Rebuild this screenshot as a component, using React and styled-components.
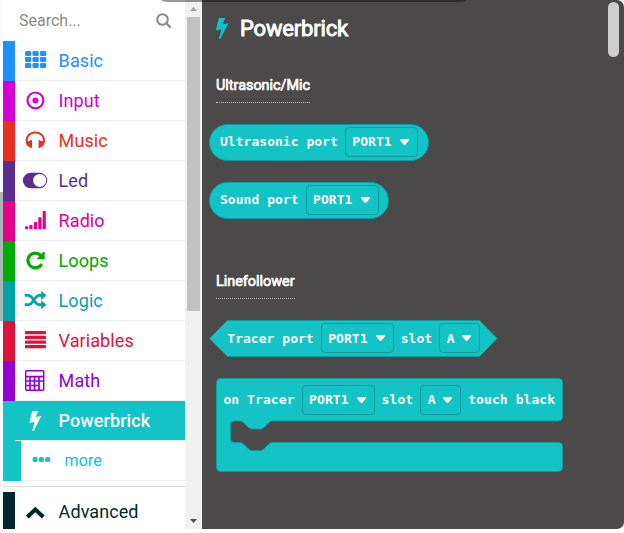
import React from "react";
import styled, { createGlobalStyle } from "styled-components";

const TEAL = "#14c3c5";
const EDGE = "#109c9e";

const Global = createGlobalStyle`
  * { box-sizing: border-box; }
  body { margin: 0; background: #fff; overflow: hidden; font-family: Roboto, sans-serif; }
`;

const Page = styled.main`
  position: relative;
  display: flex;
  width: 624px;
  height: 533px;
  overflow: hidden;
  background: #fff;
`;

const Gutter = styled.div`
  width: 3px;
  height: 529px;
  background: linear-gradient(#fafafa 0 192px, #a9b4b4 192px 321px, #fafafa 321px);
`;

const Toolbox = styled.nav`
  display: flex;
  flex-direction: column;
  width: 182px;
  height: 529px;
  overflow: hidden;
  background: #fff;
`;

const Search = styled.div`
  display: flex;
  flex: 0 0 41px;
  align-items: center;
  justify-content: space-between;
  padding: 0 14px 0 16px;
  color: #8a8a8a;
  font-size: 16px;
`;

const Category = styled.div`
  display: flex;
  flex: 0 0 40px;
  color: ${(p) => (p.$active ? "#fff" : p.$color)};
  line-height: 39px;
  letter-spacing: 0.08px;
  &::before {
    content: "";
    width: ${(p) => (p.$nested ? 18 : 12)}px;
    background: ${(p) => p.$color};
  }
`;

const CategoryBody = styled.div`
  display: flex;
  flex: 1;
  align-items: center;
  border-bottom: 1px solid #eceff1;
  background: ${(p) => (p.$active ? TEAL : "#fff")};
  font-size: ${(p) => (p.$nested ? 16 : 18)}px;
  font-weight: ${(p) => (p.$active ? 500 : 400)};
`;

const IconCell = styled.span`
  display: flex;
  align-self: flex-start;
  width: 43.6px;
  padding: 8px 0 0 9px;
`;

const Divider = styled.div`
  flex: 0 0 11px;
  padding-top: 5px;
  &::before {
    content: "";
    display: block;
    height: 1px;
    background: #dededf;
  }
`;

const Scrollbar = styled.div`
  display: flex;
  flex-direction: column;
  justify-content: space-between;
  align-items: center;
  width: 17px;
  height: 529px;
  background: #f1f1f1;
`;

const Thumb = styled.div`
  width: 13px;
  height: 294px;
  margin-bottom: auto;
  background: #c1c1c1;
`;

const ArrowButton = styled.div`
  display: flex;
  height: 17px;
  align-items: center;
  justify-content: center;
`;

const Flyout = styled.section`
  position: relative;
  width: 422px;
  height: 529px;
  padding: 13px 0 0 7px;
  border-radius: 0 7px 7px 0;
  background: #4b4949;
  color: #fff;
`;

const Title = styled.h1`
  display: flex;
  align-items: center;
  gap: 12px;
  height: 30px;
  margin: 0 0 0 7px;
  font-size: 22px;
  font-weight: 400;
  letter-spacing: -0.18px;
  -webkit-text-stroke: 0.9px currentColor;
`;

const GroupLabel = styled.h2`
  width: max-content;
  height: 26px;
  margin: ${(p) => p.$top}px 0 ${(p) => p.$bottom}px 7px;
  border-bottom: 1px dotted #bbb;
  font-size: 14.4px;
  font-weight: 400;
  line-height: 17px;
  -webkit-text-stroke: 0.7px currentColor;
`;

const Block = styled.div`
  position: relative;
  display: flex;
  align-items: center;
  width: ${(p) => p.$width}px;
  height: ${(p) => p.$height || 37}px;
  margin: 0 0 ${(p) => p.$gap || 0}px ${(p) => p.$indent || 0}px;
`;

const Shape = styled.svg`
  position: absolute;
  inset: 0;
  overflow: visible;
  fill: ${TEAL};
  stroke: ${EDGE};
`;

const BlockRow = styled.div`
  position: relative;
  display: flex;
  align-items: center;
  align-self: flex-start;
  gap: 7px;
  height: ${(p) => p.$height || 35}px;
  padding-left: ${(p) => p.$pad}px;
  font: 700 13px "DejaVu Sans Mono", monospace;
  letter-spacing: ${(p) => p.$tracking || 0.03}px;
  white-space: pre;
`;

const Select = styled.span`
  display: flex;
  align-items: center;
  justify-content: space-between;
  width: ${(p) => p.$width}px;
  height: 30px;
  padding: 0 7px 0 6.5px;
  border: 1px solid ${EDGE};
  border-radius: 4px;
`;

const FlyoutThumb = styled.div`
  position: absolute;
  top: 2px;
  right: 5px;
  width: 11px;
  height: 55px;
  border-radius: 6px;
  background: #cecece;
`;

const TopShade = styled.div`
  position: absolute;
  top: -18px;
  left: 157px;
  width: 314px;
  height: 20px;
  border-radius: 10px;
  background: rgba(0, 0, 0, 0.4);
`;

const Drawing = styled.svg`
  flex: none;
  overflow: visible;
`;

const Glyph = ({ width = 24, height = 24, box = "0 0 24 24", children }) => (
  <Drawing width={width} height={height} viewBox={box} fill="currentColor">{children}</Drawing>
);

const BoltPath = <path d="M8.2 2h6.1l-2.7 6.1 5.8-1.2L9.6 22H8.2l2.5-9.3-5.4 1.2z" />;

const icons = {
  grid: <Glyph>{[2, 8, 14].map((y) => [1, 8.5, 16].map((x) => <rect key={`${x}-${y}`} x={x} y={y} width="6.2" height="5" rx="1.2" />))}</Glyph>,
  target: <Glyph><circle cx="11.4" cy="11.4" r="7.9" fill="none" stroke="currentColor" strokeWidth="2.2" /><circle cx="11.4" cy="11.4" r="3" /></Glyph>,
  headphones: <Glyph><g transform="translate(-.7 -.8)"><path d="M3.9 17.3C2.6 15 2.3 13.9 2.3 12.2 2.3 7.4 6.5 3.4 12 3.4s9.700 4 9.700 8.800c0 1.700-.4 2.800-1.600 5.100l-1.400.7-1-4.500 1.900-.6C20.200 8.700 16.700 5.400 12 5.400s-8.200 3.300-7.500 7.500l1.900.6-1 4.500z" /><path d="M3.200 14.500 7.200 12q1.500-.5 1.500.8v6.100q0 1.200-1.200.9L3.400 17zm17.600 0L16.800 12q-1.500-.5-1.500.8v6.100q0 1.200 1.200.9l4.100-2.800z" /></g></Glyph>,
  toggle: <Glyph><path fillRule="evenodd" d="M6.700 3.700h8.700a7.800 7.800 0 0 1 0 15.600H6.700a7.800 7.800 0 0 1 0-15.600m9 1.200a6.500 6.500 0 1 0 0 13.100 6.500 6.500 0 0 0 0-13.100" /></Glyph>,
  signal: <Glyph>{[[1, 3], [5.3, 4.3], [10, 7.3], [14.3, 12], [18.6, 18.3]].map(([x, h]) => <rect key={x} x={x} y={20.3 - h} width="3.2" height={h} rx=".5" />)}</Glyph>,
  repeat: <Glyph><path transform="translate(-.6 -.5)" d="M18.400 15.600a7.400 7.400 0 1 1-1.100-8.800" fill="none" stroke="currentColor" strokeWidth="3.200" /><path transform="translate(-.7 -.7)" d="M21.400 4v6.100q0 .9-.9.9h-6.100q-.8-.2-.3-1l5.800-6.400q1.400-.6 1.500.4" /></Glyph>,
  shuffle: <Glyph><g transform="translate(-.5 -1.300)"><path d="M1.200 7.600h3.600c4.800 0 6 9.400 10.900 9.400H19M1.200 17h3.600C9.800 17 11 7.600 15.700 7.600H19" fill="none" stroke="currentColor" strokeWidth="2.800" /><path d="m17.700 3 4.900 4.300v.6l-4.900 4.300zM17.700 12.500l4.900 4.200v.6l-4.900 4.200z" /></g></Glyph>,
  lines: <Glyph>{[2, 6.7, 11.4, 16].map((y) => <rect key={y} x="1" y={y} width="21" height="3.3" rx=".5" />)}</Glyph>,
  calculator: <Glyph>
    <rect x="1.700" y="1.700" width="18" height="19.600" rx="1" fill="none" stroke="currentColor" strokeWidth="1.500" />
    <path d="M2 7.700h17.500M2 12h17.500M2 16.500h13M6 8v13M10.500 8v13M15 8v13" fill="none" stroke="currentColor" strokeWidth="1.700" />
  </Glyph>,
  bolt: <Glyph>{BoltPath}</Glyph>,
  dots: <Glyph>{[2.7, 8.9, 15.1].map((x) => <rect key={x} x={x} y="8" width="5" height="5" rx="1.500" />)}</Glyph>,
  chevron: <Glyph><path d="m3.300 17 8-7.500 8 7.500" fill="none" stroke="currentColor" strokeWidth="4" /></Glyph>,
};

const categories = [
  { name: "Basic", color: "#1e90ff", icon: "grid" },
  { name: "Input", color: "#d400d4", icon: "target" },
  { name: "Music", color: "#e63022", icon: "headphones" },
  { name: "Led", color: "#5c2d91", icon: "toggle" },
  { name: "Radio", color: "#e3008c", icon: "signal" },
  { name: "Loops", color: "#00aa00", icon: "repeat" },
  { name: "Logic", color: "#00a4a6", icon: "shuffle" },
  { name: "Variables", color: "#dc143c", icon: "lines" },
  { name: "Math", color: "#9400d3", icon: "calculator" },
  { name: "Powerbrick", color: TEAL, icon: "bolt", active: true },
  { name: "more", color: TEAL, icon: "dots", nested: true },
];

const Entry = ({ name, color, icon, active, nested }) => (
  <Category $color={color} $active={active} $nested={nested}>
    <CategoryBody $active={active} $nested={nested}>
      <IconCell>{icons[icon]}</IconCell>
      {name}
    </CategoryBody>
  </Category>
);

const Dropdown = ({ value }) => (
  <Select $width={value === "A" ? 41 : 73}>
    {value}
    <Glyph width={11} height={8} box="0 0 11 8"><path d="M1.700 1h7.600q1.300.3.500 1.500L6.500 6.500q-1 .9-2 0L1.200 2.500Q.4 1.300 1.700 1" /></Glyph>
  </Select>
);

export default function App() {
  return (
    <>
      <Global />
      <Page>
        <Gutter />
        <Toolbox>
          <Search>
            Search...
            <Glyph width={15} height={15} box="0 0 15 15"><circle cx="6.500" cy="6.500" r="5.300" fill="none" stroke="currentColor" strokeWidth="2" /><path d="m10.300 10.300 3.700 3.700" stroke="currentColor" strokeWidth="2.200" strokeLinecap="round" /></Glyph>
          </Search>
          {categories.map((c) => <Entry key={c.name} {...c} />)}
          <Divider />
          <Entry name="Advanced" color="#00272b" icon="chevron" />
        </Toolbox>
        <Scrollbar>
          <ArrowButton><Glyph width={7} height={4} box="0 0 7 4"><path fill="#a3a3a3" d="m0 4 3.500-4L7 4z" /></Glyph></ArrowButton>
          <Thumb />
          <ArrowButton><Glyph width={7} height={4} box="0 0 7 4"><path fill="#505050" d="m0 0 3.500 4L7 0z" /></Glyph></ArrowButton>
        </Scrollbar>
        <Flyout>
          <Title>
            <Glyph width={12} height={21} box="5.500 2 11.500 20"><g fill={TEAL}>{BoltPath}</g></Glyph>
            Powerbrick
          </Title>
          <GroupLabel $top={34} $bottom={21}>Ultrasonic/Mic</GroupLabel>
          <Block $width={220} $gap={21}>
            <Shape width="220" height="37"><rect x=".5" y=".5" width="219" height="36" rx="18" /></Shape>
            <BlockRow $pad={11}>Ultrasonic port<Dropdown value="PORT1" /></BlockRow>
          </Block>
          <Block $width={180}>
            <Shape width="180" height="37"><rect x=".5" y=".5" width="179" height="36" rx="18" /></Shape>
            <BlockRow $pad={11}>Sound port<Dropdown value="PORT1" /></BlockRow>
          </Block>
          <GroupLabel $top={54} $bottom={21}>Linefollower</GroupLabel>
          <Block $width={289} $gap={21}>
            <Shape width="289" height="37"><path d="M18.300.5h252.200l17.500 18-17.500 18H18.300L.5 18.500z" /></Shape>
            <BlockRow $pad={18.3} $height={36}>Tracer port<Dropdown value="PORT1" />slot<Dropdown value="A" /></BlockRow>
          </Block>
          <Block $width={347} $height={94} $indent={7}>
            <Shape width="347" height="94"><path d="M4.500.5h338q4 0 4 4v34.500q0 4-4 4H56.500c-2 0-3 1-4 2l-4 4q-2 2-4 2H36q-2 0-4-2l-4-4q-2-2-4-2h-5.500q-4 0-4 4v13.500q0 4 4 4H24q2 0 4 2l4 4q2 2 4 2h8.500q2 0 4-2l4-4q2-2 4-2h286q4 0 4 4v21q0 4-4 4h-338q-4 0-4-4v-85q0-4 4-4z" /></Shape>
            <BlockRow $height={43} $pad={7.4} $tracking={0.08}>on Tracer<Dropdown value="PORT1" />slot<Dropdown value="A" />touch black</BlockRow>
          </Block>
          <FlyoutThumb />
        </Flyout>
        <TopShade />
      </Page>
    </>
  );
}
